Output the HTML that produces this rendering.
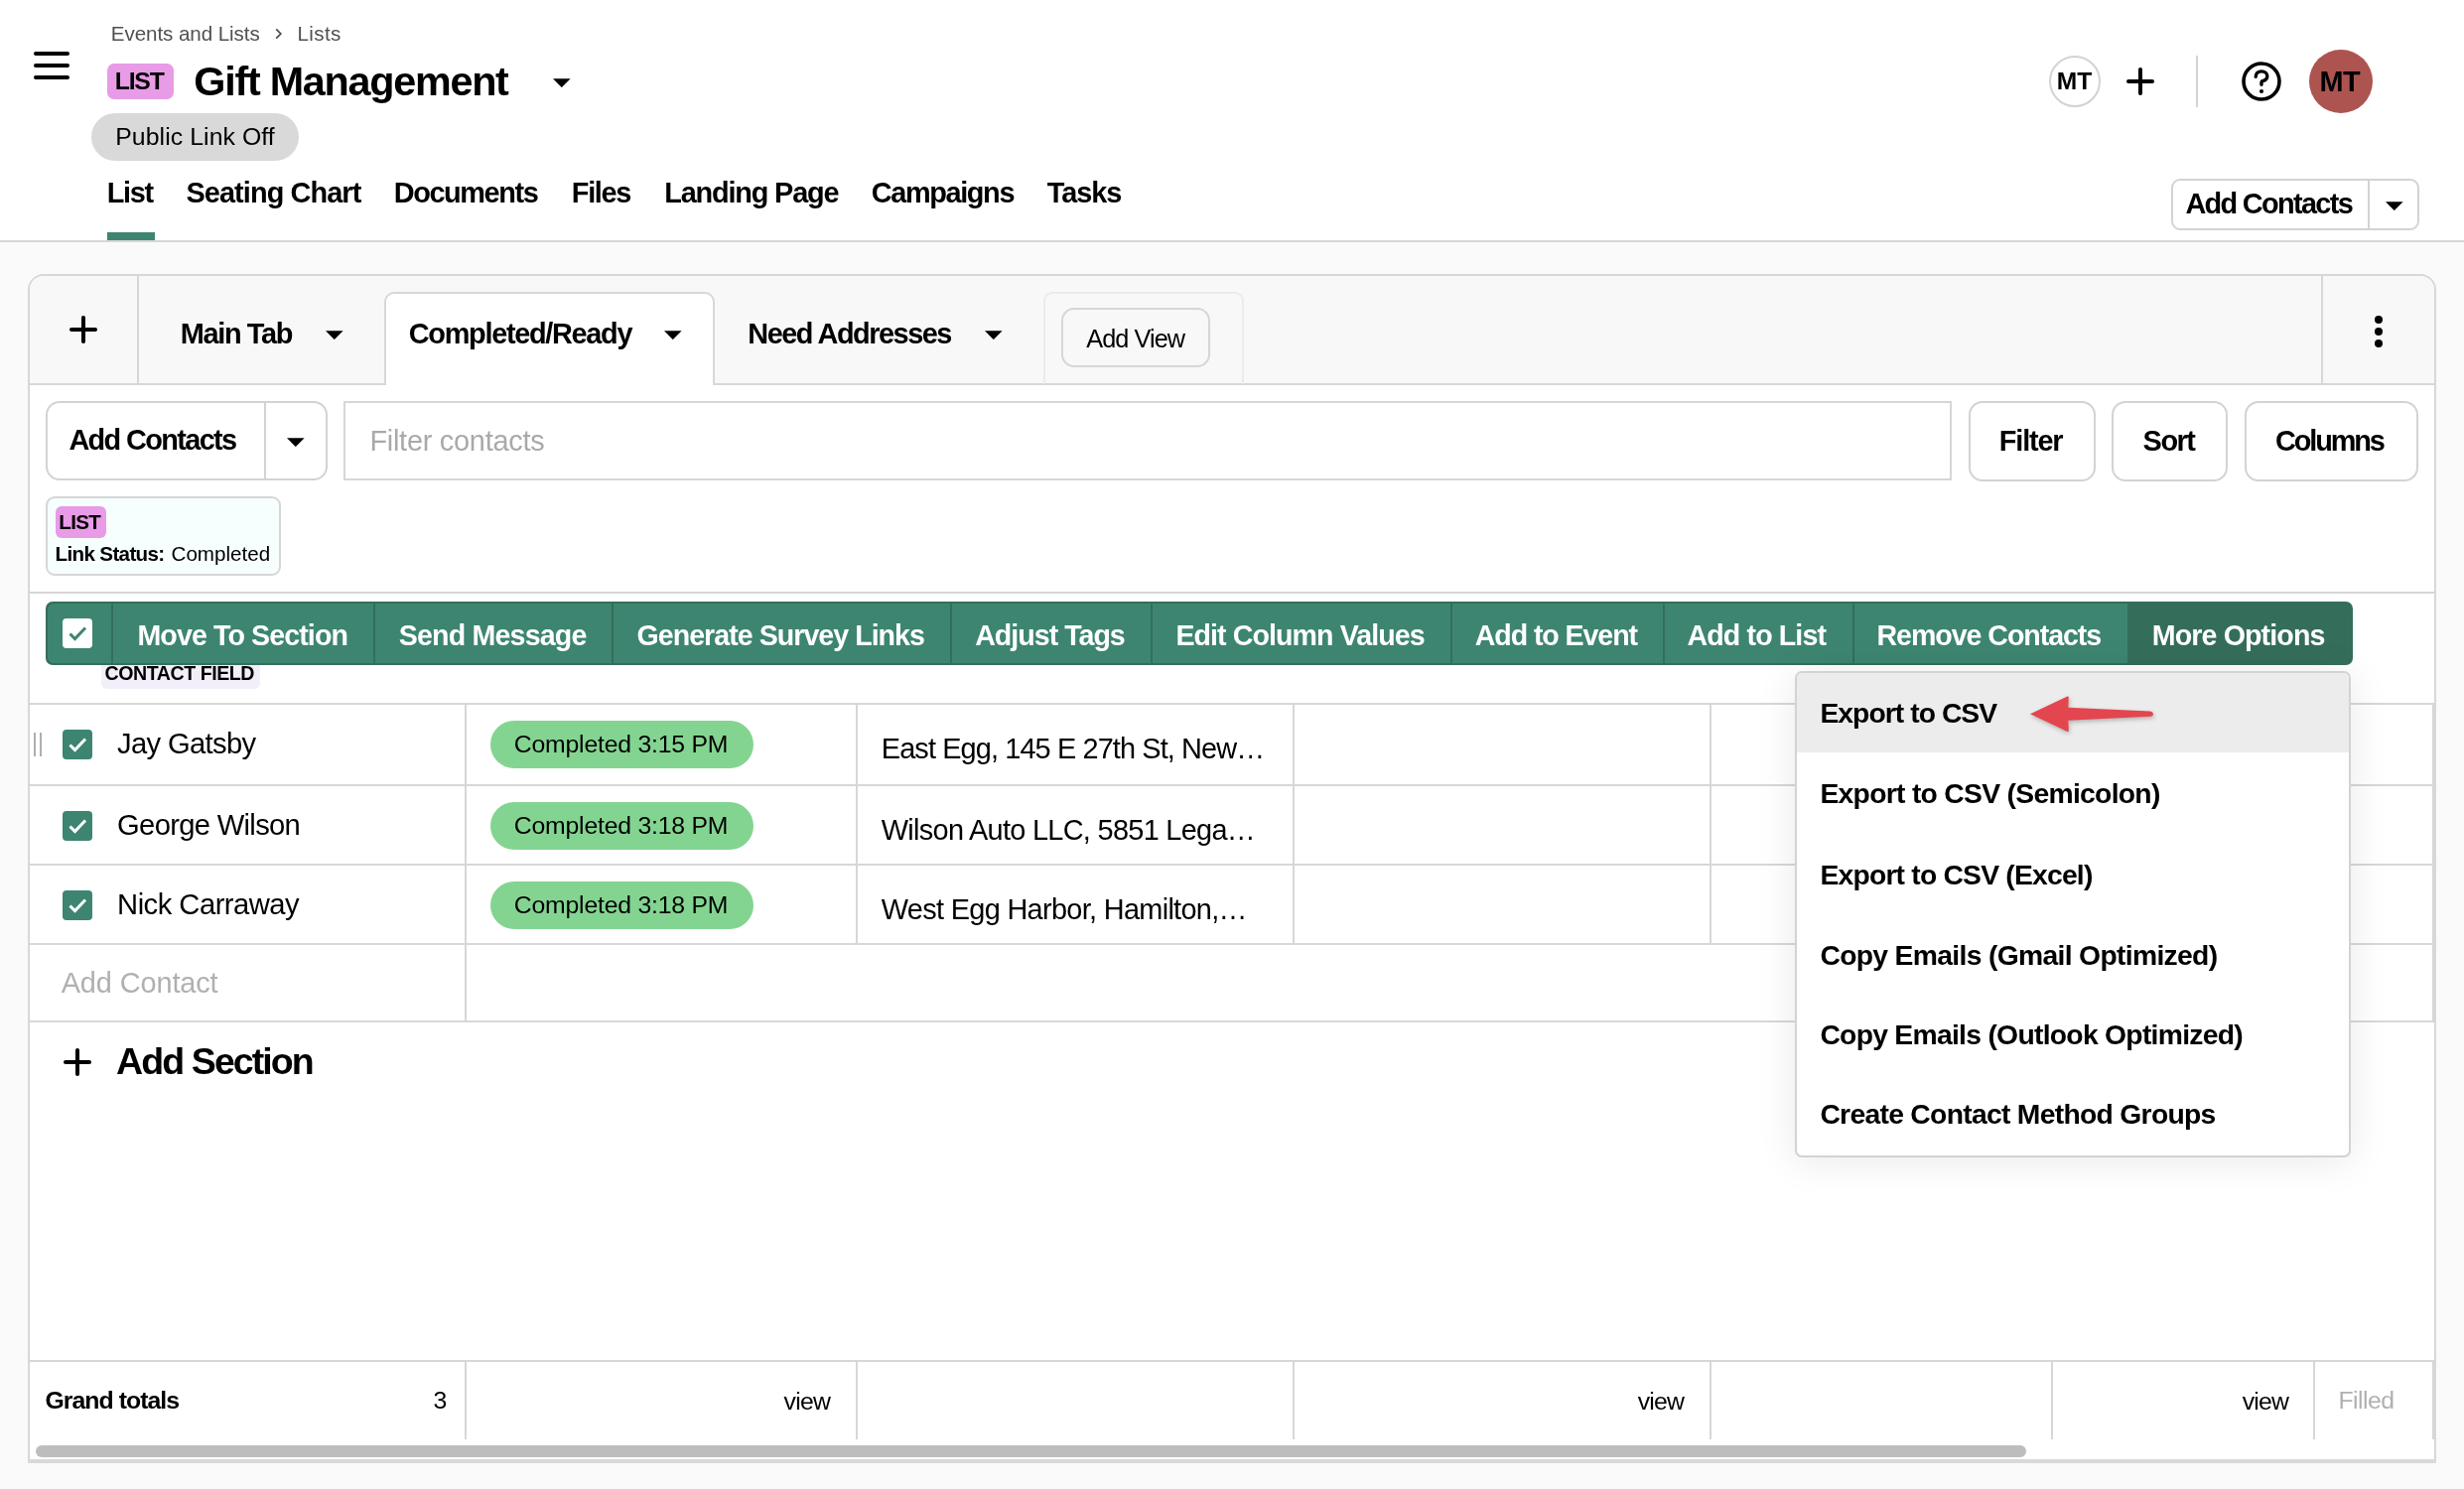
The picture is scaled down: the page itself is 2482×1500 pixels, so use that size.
<!DOCTYPE html>
<html><head><meta charset="utf-8"><style>
html,body{margin:0;padding:0;}
body{width:2482px;height:1500px;position:relative;overflow:hidden;background:#fafafa;font-family:"Liberation Sans",sans-serif;}
.a{position:absolute;}
.t{position:absolute;white-space:nowrap;opacity:0.999;}
</style></head><body>
<div class="a" style="left:0px;top:0px;width:2482px;height:242px;background:#fff;"></div>
<div class="a" style="left:0px;top:242px;width:2482px;height:2px;background:#d7d7d7;"></div>
<div class="a" style="left:34px;top:52px;width:36px;height:4px;background:#000;border-radius:2px;"></div>
<div class="a" style="left:34px;top:64px;width:36px;height:4px;background:#000;border-radius:2px;"></div>
<div class="a" style="left:34px;top:76px;width:36px;height:4px;background:#000;border-radius:2px;"></div>
<div class="t" style="left:111.80px;top:21px;font-size:20.60px;line-height:25px;letter-spacing:-0.076px;color:#505050;">Events and Lists</div>
<svg class="a" style="left:274px;top:26px" width="12" height="16" viewBox="0 0 12 16"><path d="M4.2 3.4 L8.8 8 L4.2 12.6" stroke="#4a4a4a" stroke-width="1.7" fill="none"/></svg>
<div class="t" style="left:299.40px;top:21px;font-size:20.60px;line-height:25px;letter-spacing:0.412px;color:#505050;">Lists</div>
<div class="a" style="left:108px;top:64px;width:67px;height:36px;background:#e89be6;border-radius:7px;"></div>
<div class="t" style="left:115.80px;top:67.4px;font-size:24.80px;line-height:30px;letter-spacing:-1.247px;color:#000;font-weight:700;">LIST</div>
<div class="t" style="left:195.30px;top:57.400000000000006px;font-size:41.30px;line-height:50px;letter-spacing:-1.245px;color:#000;font-weight:700;">Gift Management</div>
<svg class="a" style="left:557.2px;top:78.5px" width="17.6" height="9.3" viewBox="0 0 17.6 9.3"><path d="M0 0.3 L17.6 0.3 L8.8 9.100000000000001 Z" fill="#000"/></svg>
<div class="a" style="left:92px;top:114px;width:209px;height:48px;background:#d9d9d9;border-radius:24px;"></div>
<div class="t" style="left:116.20px;top:122.80000000000001px;font-size:24.80px;line-height:30px;letter-spacing:0.079px;color:#000;">Public Link Off</div>
<div class="t" style="left:107.80px;top:177px;font-size:28.90px;line-height:35px;letter-spacing:-1.361px;color:#000;font-weight:700;">List</div>
<div class="t" style="left:187.40px;top:177px;font-size:28.90px;line-height:35px;letter-spacing:-0.907px;color:#000;font-weight:700;">Seating Chart</div>
<div class="t" style="left:396.80px;top:177px;font-size:28.90px;line-height:35px;letter-spacing:-1.420px;color:#000;font-weight:700;">Documents</div>
<div class="t" style="left:575.80px;top:177px;font-size:28.90px;line-height:35px;letter-spacing:-1.316px;color:#000;font-weight:700;">Files</div>
<div class="t" style="left:669.30px;top:177px;font-size:28.90px;line-height:35px;letter-spacing:-1.197px;color:#000;font-weight:700;">Landing Page</div>
<div class="t" style="left:877.80px;top:177px;font-size:28.90px;line-height:35px;letter-spacing:-1.384px;color:#000;font-weight:700;">Campaigns</div>
<div class="t" style="left:1054.80px;top:177px;font-size:28.90px;line-height:35px;letter-spacing:-1.073px;color:#000;font-weight:700;">Tasks</div>
<div class="a" style="left:108px;top:234px;width:48px;height:8px;background:#3d8571;"></div>
<div class="a" style="left:2064px;top:56px;width:52px;height:52px;border:2px solid #d3d3d3;border-radius:50%;box-sizing:border-box;background:#fff;"></div>
<div class="t" style="left:2071.80px;top:66.9px;font-size:24.60px;line-height:30px;letter-spacing:-0.122px;color:#000;font-weight:700;">MT</div>
<div class="a" style="left:2142px;top:79.5px;width:28px;height:4.0px;background:#000;border-radius:2px;"></div>
<div class="a" style="left:2154px;top:68px;width:4px;height:28px;background:#000;border-radius:2px;"></div>
<div class="a" style="left:2212px;top:56px;width:2px;height:52px;background:#d3d3d3;"></div>
<svg class="a" style="left:2256px;top:60px" width="44" height="44" viewBox="0 0 44 44"><circle cx="22" cy="22" r="18" stroke="#000" stroke-width="3.6" fill="none"/><path d="M16.2 17.2 C16.2 13.8 18.7 11.9 22 11.9 C25.3 11.9 27.8 13.8 27.8 16.8 C27.8 20 25 21.3 23 21.7 Q22 22 22 23.2 L22 25.2" stroke="#000" stroke-width="3.4" fill="none" stroke-linecap="round"/><circle cx="22" cy="32" r="2.1" fill="#000"/></svg>
<div class="a" style="left:2326px;top:50px;width:64px;height:64px;background:#ad5451;border-radius:50%;"></div>
<div class="t" style="left:2336.40px;top:65.3px;font-size:28.90px;line-height:35px;letter-spacing:-0.332px;color:#000;font-weight:700;">MT</div>
<div class="a" style="left:2187px;top:180px;width:250px;height:52px;border:2px solid #d3d3d3;border-radius:9px;box-sizing:border-box;background:#fff;"></div>
<div class="a" style="left:2385px;top:181px;width:2px;height:50px;background:#d3d3d3;"></div>
<div class="t" style="left:2201.40px;top:187.8px;font-size:28.90px;line-height:35px;letter-spacing:-1.677px;color:#000;font-weight:700;">Add Contacts</div>
<svg class="a" style="left:2403px;top:202.5px" width="17.6" height="9.3" viewBox="0 0 17.6 9.3"><path d="M0 0.3 L17.6 0.3 L8.8 9.100000000000001 Z" fill="#000"/></svg>
<div class="a" style="left:0px;top:244px;width:2482px;height:1256px;background:#fafafa;"></div>
<div class="a" style="left:28px;top:276px;width:2426px;height:1198px;border:2px solid #d7d7d7;border-radius:16px 16px 0 0;box-sizing:border-box;background:#fff;"></div>
<div class="a" style="left:30px;top:278px;width:2422px;height:108px;background:#f8f8f8;border-radius:14px 14px 0 0;"></div>
<div class="a" style="left:30px;top:386px;width:2422px;height:2px;background:#d7d7d7;"></div>
<div class="a" style="left:28px;top:1470px;width:2426px;height:4px;background:#d9d9d9;"></div>
<div class="a" style="left:138px;top:278px;width:2px;height:108px;background:#d7d7d7;"></div>
<div class="a" style="left:70px;top:330px;width:28px;height:4px;background:#000;border-radius:2px;"></div>
<div class="a" style="left:82px;top:318px;width:4px;height:28px;background:#000;border-radius:2px;"></div>
<div class="t" style="left:181.80px;top:319px;font-size:28.90px;line-height:35px;letter-spacing:-1.355px;color:#000;font-weight:700;">Main Tab</div>
<svg class="a" style="left:328.2px;top:332.5px" width="17.6" height="9.3" viewBox="0 0 17.6 9.3"><path d="M0 0.3 L17.6 0.3 L8.8 9.100000000000001 Z" fill="#000"/></svg>
<div class="a" style="left:387px;top:294px;width:333px;height:94px;border:2px solid #d7d7d7;border-bottom:none;border-radius:10px 10px 0 0;box-sizing:border-box;background:#fff;"></div>
<div class="t" style="left:411.80px;top:319px;font-size:28.90px;line-height:35px;letter-spacing:-1.306px;color:#000;font-weight:700;">Completed/Ready</div>
<svg class="a" style="left:669.2px;top:332.5px" width="17.6" height="9.3" viewBox="0 0 17.6 9.3"><path d="M0 0.3 L17.6 0.3 L8.8 9.100000000000001 Z" fill="#000"/></svg>
<div class="t" style="left:753.30px;top:319px;font-size:28.90px;line-height:35px;letter-spacing:-1.478px;color:#000;font-weight:700;">Need Addresses</div>
<svg class="a" style="left:992.2px;top:332.5px" width="17.6" height="9.3" viewBox="0 0 17.6 9.3"><path d="M0 0.3 L17.6 0.3 L8.8 9.100000000000001 Z" fill="#000"/></svg>
<div class="a" style="left:1051px;top:294px;width:202px;height:93px;border:2px solid #ebebeb;border-bottom:none;border-radius:9px 9px 0 0;box-sizing:border-box;"></div>
<div class="a" style="left:1069px;top:310px;width:150px;height:60px;border:2px solid #d6d6d6;border-radius:13px;box-sizing:border-box;"></div>
<div class="t" style="left:1094.20px;top:326px;font-size:25.30px;line-height:31px;letter-spacing:-0.927px;color:#000;">Add View</div>
<div class="a" style="left:2338px;top:278px;width:2px;height:108px;background:#d7d7d7;"></div>
<div class="a" style="left:2392px;top:318px;width:8px;height:8px;background:#000;border-radius:50%;"></div>
<div class="a" style="left:2392px;top:330px;width:8px;height:8px;background:#000;border-radius:50%;"></div>
<div class="a" style="left:2392px;top:342px;width:8px;height:8px;background:#000;border-radius:50%;"></div>
<div class="a" style="left:46px;top:404px;width:284px;height:80px;border:2px solid #d3d3d3;border-radius:14px;box-sizing:border-box;background:#fff;"></div>
<div class="a" style="left:266px;top:405px;width:2px;height:78px;background:#d3d3d3;"></div>
<div class="t" style="left:69.40px;top:426px;font-size:28.90px;line-height:35px;letter-spacing:-1.641px;color:#000;font-weight:700;">Add Contacts</div>
<svg class="a" style="left:289.2px;top:440.5px" width="17.6" height="9.3" viewBox="0 0 17.6 9.3"><path d="M0 0.3 L17.6 0.3 L8.8 9.100000000000001 Z" fill="#000"/></svg>
<div class="a" style="left:346px;top:404px;width:1620px;height:80px;border:2px solid #d6d6d6;box-sizing:border-box;background:#fff;"></div>
<div class="t" style="left:372.40px;top:427px;font-size:28.90px;line-height:35px;letter-spacing:-0.255px;color:#a9a9a9;">Filter contacts</div>
<div class="a" style="left:1983px;top:404px;width:128px;height:81px;border:2px solid #d3d3d3;border-radius:14px;box-sizing:border-box;background:#fff;"></div>
<div class="t" style="left:2013.80px;top:427.4px;font-size:28.90px;line-height:35px;letter-spacing:-1.172px;color:#000;font-weight:700;">Filter</div>
<div class="a" style="left:2127px;top:404px;width:117px;height:81px;border:2px solid #d3d3d3;border-radius:14px;box-sizing:border-box;background:#fff;"></div>
<div class="t" style="left:2158.60px;top:427.4px;font-size:28.90px;line-height:35px;letter-spacing:-1.467px;color:#000;font-weight:700;">Sort</div>
<div class="a" style="left:2261px;top:404px;width:175px;height:81px;border:2px solid #d3d3d3;border-radius:14px;box-sizing:border-box;background:#fff;"></div>
<div class="t" style="left:2292.10px;top:427.4px;font-size:28.90px;line-height:35px;letter-spacing:-2.156px;color:#000;font-weight:700;">Columns</div>
<div class="a" style="left:46px;top:500px;width:237px;height:80px;border:2px solid #d6d6d6;border-radius:9px;box-sizing:border-box;background:#f6fefe;"></div>
<div class="a" style="left:56px;top:510px;width:51px;height:32px;background:#e89be6;border-radius:6px;"></div>
<div class="t" style="left:59.30px;top:513px;font-size:20.60px;line-height:25px;letter-spacing:-0.713px;color:#000;font-weight:700;">LIST</div>
<div class="t" style="left:55.60px;top:545px;font-size:20.60px;line-height:25px;letter-spacing:-0.663px;color:#000;font-weight:700;">Link Status:</div>
<div class="t" style="left:172.50px;top:545px;font-size:20.60px;line-height:25px;letter-spacing:0.010px;color:#000;">Completed</div>
<div class="a" style="left:30px;top:596px;width:2422px;height:2px;background:#d7d7d7;"></div>
<div class="a" style="left:46px;top:606px;width:2324px;height:64px;background:#346e5a;border-radius:7px;"></div>
<div class="a" style="left:48px;top:608px;width:2095px;height:60px;background:#3d8571;border-radius:6px 0 0 6px;"></div>
<div class="a" style="left:63px;top:623px;width:30px;height:30px;background:#fff;border-radius:4px;"></div>
<svg class="a" style="left:63px;top:623px" width="30" height="30" viewBox="0 0 30 30"><path d="M7.5 15.5 L12.5 20.5 L23 9.5" stroke="#3d8571" stroke-width="3" fill="none"/></svg>
<div class="a" style="left:112px;top:608px;width:2px;height:60px;background:#346e5a;"></div>
<div class="a" style="left:376px;top:608px;width:2px;height:60px;background:#346e5a;"></div>
<div class="a" style="left:616px;top:608px;width:2px;height:60px;background:#346e5a;"></div>
<div class="a" style="left:957px;top:608px;width:2px;height:60px;background:#346e5a;"></div>
<div class="a" style="left:1159px;top:608px;width:2px;height:60px;background:#346e5a;"></div>
<div class="a" style="left:1461px;top:608px;width:2px;height:60px;background:#346e5a;"></div>
<div class="a" style="left:1675px;top:608px;width:2px;height:60px;background:#346e5a;"></div>
<div class="a" style="left:1866px;top:608px;width:2px;height:60px;background:#346e5a;"></div>
<div class="t" style="left:138.40px;top:623px;font-size:28.60px;line-height:35px;letter-spacing:-0.894px;color:#fff;font-weight:700;">Move To Section</div>
<div class="t" style="left:401.70px;top:623px;font-size:28.60px;line-height:35px;letter-spacing:-0.817px;color:#fff;font-weight:700;">Send Message</div>
<div class="t" style="left:641.50px;top:623px;font-size:28.60px;line-height:35px;letter-spacing:-0.973px;color:#fff;font-weight:700;">Generate Survey Links</div>
<div class="t" style="left:982.20px;top:623px;font-size:28.60px;line-height:35px;letter-spacing:-0.993px;color:#fff;font-weight:700;">Adjust Tags</div>
<div class="t" style="left:1184.40px;top:623px;font-size:28.60px;line-height:35px;letter-spacing:-0.917px;color:#fff;font-weight:700;">Edit Column Values</div>
<div class="t" style="left:1485.80px;top:623px;font-size:28.60px;line-height:35px;letter-spacing:-1.098px;color:#fff;font-weight:700;">Add to Event</div>
<div class="t" style="left:1699.50px;top:623px;font-size:28.60px;line-height:35px;letter-spacing:-0.882px;color:#fff;font-weight:700;">Add to List</div>
<div class="t" style="left:1890.50px;top:623px;font-size:28.60px;line-height:35px;letter-spacing:-1.056px;color:#fff;font-weight:700;">Remove Contacts</div>
<div class="t" style="left:2167.80px;top:623px;font-size:28.60px;line-height:35px;letter-spacing:-0.882px;color:#fff;font-weight:700;">More Options</div>
<div class="a" style="left:102px;top:670px;width:160px;height:24px;background:#f3effa;border-radius:0 0 6px 6px;"></div>
<div class="t" style="left:105.50px;top:666px;font-size:19.60px;line-height:24px;letter-spacing:-0.452px;color:#000;font-weight:700;">CONTACT FIELD</div>
<div class="a" style="left:30px;top:708px;width:2422px;height:2px;background:#d7d7d7;"></div>
<div class="a" style="left:30px;top:790px;width:2422px;height:2px;background:#d7d7d7;"></div>
<div class="a" style="left:30px;top:870px;width:2422px;height:2px;background:#d7d7d7;"></div>
<div class="a" style="left:30px;top:950px;width:2422px;height:2px;background:#d7d7d7;"></div>
<div class="a" style="left:30px;top:1028px;width:2422px;height:2px;background:#d7d7d7;"></div>
<div class="a" style="left:468px;top:710px;width:2px;height:240px;background:#d7d7d7;"></div>
<div class="a" style="left:862px;top:710px;width:2px;height:240px;background:#d7d7d7;"></div>
<div class="a" style="left:1302px;top:710px;width:2px;height:240px;background:#d7d7d7;"></div>
<div class="a" style="left:1722px;top:710px;width:2px;height:240px;background:#d7d7d7;"></div>
<div class="a" style="left:468px;top:950px;width:2px;height:78px;background:#d7d7d7;"></div>
<div class="a" style="left:2450px;top:710px;width:2px;height:318px;background:#d7d7d7;"></div>
<div class="a" style="left:34px;top:738px;width:2px;height:24px;background:#b0b0b0;"></div>
<div class="a" style="left:40px;top:738px;width:2px;height:24px;background:#b0b0b0;"></div>
<div class="a" style="left:63px;top:735px;width:30px;height:30px;background:#3d8571;border-radius:4px;"></div>
<svg class="a" style="left:63px;top:735px" width="30" height="30" viewBox="0 0 30 30"><path d="M7.5 15.5 L12.5 20.5 L23 9.5" stroke="#fff" stroke-width="3" fill="none"/></svg>
<div class="t" style="left:118.10px;top:731.4px;font-size:29.20px;line-height:36px;letter-spacing:-0.673px;color:#000;">Jay Gatsby</div>
<div class="a" style="left:494px;top:726px;width:265px;height:48px;background:#84d491;border-radius:24px;"></div>
<div class="t" style="left:517.80px;top:735px;font-size:24.80px;line-height:30px;letter-spacing:-0.215px;color:#000;">Completed 3:15 PM</div>
<div class="t" style="left:887.80px;top:737.2px;font-size:28.90px;line-height:35px;letter-spacing:-0.884px;color:#000;">East Egg, 145 E 27th St, New…</div>
<div class="a" style="left:63px;top:817px;width:30px;height:30px;background:#3d8571;border-radius:4px;"></div>
<svg class="a" style="left:63px;top:817px" width="30" height="30" viewBox="0 0 30 30"><path d="M7.5 15.5 L12.5 20.5 L23 9.5" stroke="#fff" stroke-width="3" fill="none"/></svg>
<div class="t" style="left:118.10px;top:813.4px;font-size:29.20px;line-height:36px;letter-spacing:-0.694px;color:#000;">George Wilson</div>
<div class="a" style="left:494px;top:808px;width:265px;height:48px;background:#84d491;border-radius:24px;"></div>
<div class="t" style="left:517.80px;top:817px;font-size:24.80px;line-height:30px;letter-spacing:-0.215px;color:#000;">Completed 3:18 PM</div>
<div class="t" style="left:887.80px;top:819.2px;font-size:28.90px;line-height:35px;letter-spacing:-0.700px;color:#000;">Wilson Auto LLC, 5851 Lega…</div>
<div class="a" style="left:63px;top:897px;width:30px;height:30px;background:#3d8571;border-radius:4px;"></div>
<svg class="a" style="left:63px;top:897px" width="30" height="30" viewBox="0 0 30 30"><path d="M7.5 15.5 L12.5 20.5 L23 9.5" stroke="#fff" stroke-width="3" fill="none"/></svg>
<div class="t" style="left:118.10px;top:893.4px;font-size:29.20px;line-height:36px;letter-spacing:-0.519px;color:#000;">Nick Carraway</div>
<div class="a" style="left:494px;top:888px;width:265px;height:48px;background:#84d491;border-radius:24px;"></div>
<div class="t" style="left:517.80px;top:897px;font-size:24.80px;line-height:30px;letter-spacing:-0.215px;color:#000;">Completed 3:18 PM</div>
<div class="t" style="left:887.80px;top:899.2px;font-size:28.90px;line-height:35px;letter-spacing:-0.683px;color:#000;">West Egg Harbor, Hamilton,…</div>
<div class="t" style="left:61.70px;top:973px;font-size:28.90px;line-height:35px;letter-spacing:-0.104px;color:#b0b0b0;">Add Contact</div>
<div class="a" style="left:64px;top:1068px;width:28px;height:4px;background:#000;border-radius:2px;"></div>
<div class="a" style="left:76px;top:1056px;width:4px;height:28px;background:#000;border-radius:2px;"></div>
<div class="t" style="left:117.10px;top:1047.2px;font-size:37.50px;line-height:45px;letter-spacing:-1.908px;color:#000;font-weight:700;">Add Section</div>
<div class="a" style="left:30px;top:1370px;width:2422px;height:2px;background:#d7d7d7;"></div>
<div class="a" style="left:468px;top:1372px;width:2px;height:78px;background:#d7d7d7;"></div>
<div class="a" style="left:862px;top:1372px;width:2px;height:78px;background:#d7d7d7;"></div>
<div class="a" style="left:1302px;top:1372px;width:2px;height:78px;background:#d7d7d7;"></div>
<div class="a" style="left:1722px;top:1372px;width:2px;height:78px;background:#d7d7d7;"></div>
<div class="a" style="left:2066px;top:1372px;width:2px;height:78px;background:#d7d7d7;"></div>
<div class="a" style="left:2330px;top:1372px;width:2px;height:78px;background:#d7d7d7;"></div>
<div class="a" style="left:2450px;top:1372px;width:2px;height:78px;background:#d7d7d7;"></div>
<div class="t" style="left:45.50px;top:1395.6px;font-size:24.80px;line-height:30px;letter-spacing:-0.952px;color:#000;font-weight:700;">Grand totals</div>
<div class="t" style="left:436.41px;top:1395.6px;font-size:24.80px;line-height:30px;letter-spacing:0.000px;color:#000;">3</div>
<div class="t" style="left:789.60px;top:1397px;font-size:24.80px;line-height:30px;letter-spacing:-0.791px;color:#000;">view</div>
<div class="t" style="left:1649.70px;top:1397px;font-size:24.80px;line-height:30px;letter-spacing:-0.791px;color:#000;">view</div>
<div class="t" style="left:2258.70px;top:1397px;font-size:24.80px;line-height:30px;letter-spacing:-0.791px;color:#000;">view</div>
<div class="t" style="left:2355.40px;top:1395.6px;font-size:24.80px;line-height:30px;letter-spacing:-0.534px;color:#b0b0b0;">Filled</div>
<div class="a" style="left:36px;top:1456px;width:2005px;height:12px;background:#bdbdbd;border-radius:6px;"></div>
<div class="a" style="left:1808px;top:676px;width:560px;height:490px;border:2px solid #d3d3d3;border-radius:7px;box-sizing:border-box;background:#fff;box-shadow:0 4px 40px rgba(0,0,0,0.09);"></div>
<div class="a" style="left:1810px;top:678px;width:556px;height:80px;background:#ececec;border-radius:5px 5px 0 0;"></div>
<div class="t" style="left:1833.40px;top:701px;font-size:28.30px;line-height:34px;letter-spacing:-0.955px;color:#000;font-weight:700;">Export to CSV</div>
<div class="t" style="left:1833.40px;top:781.5px;font-size:28.30px;line-height:34px;letter-spacing:-0.711px;color:#000;font-weight:700;">Export to CSV (Semicolon)</div>
<div class="t" style="left:1833.40px;top:863.6px;font-size:28.30px;line-height:34px;letter-spacing:-0.796px;color:#000;font-weight:700;">Export to CSV (Excel)</div>
<div class="t" style="left:1833.40px;top:944.5px;font-size:28.30px;line-height:34px;letter-spacing:-0.681px;color:#000;font-weight:700;">Copy Emails (Gmail Optimized)</div>
<div class="t" style="left:1833.40px;top:1024.8px;font-size:28.30px;line-height:34px;letter-spacing:-0.724px;color:#000;font-weight:700;">Copy Emails (Outlook Optimized)</div>
<div class="t" style="left:1833.40px;top:1105.2px;font-size:28.30px;line-height:34px;letter-spacing:-0.713px;color:#000;font-weight:700;">Create Contact Method Groups</div>
<svg class="a" style="left:2030px;top:690px;filter:drop-shadow(1px 2px 2px rgba(0,0,0,0.25))" width="150" height="60" viewBox="0 0 150 60"><path d="M15 29.3 L52.5 11.6 Q54 11.2 53.8 13 L53.3 22.8 L136 26.6 Q139 27.3 139 29.3 Q139 31.3 136 31.8 L53.3 35.8 L53.8 45.6 Q54 47.4 52.5 47 Z" fill="#e3464f"/></svg>
</body></html>
